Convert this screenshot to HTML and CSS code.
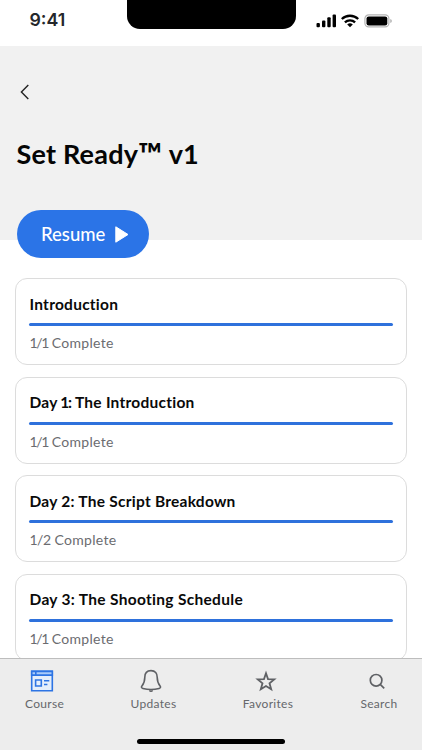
FILE: index.html
```
<!DOCTYPE html>
<html lang="en">
<head>
<meta charset="utf-8">
<meta name="viewport" content="width=device-width, initial-scale=1">
<title>Set Ready™ v1</title>
<link rel="stylesheet" href="styles.css">
</head>
<body>
<div class="screen">
  <header class="status">
    <span class="time">9:41</span>
    <span class="notch"></span>
    <svg class="status-icons" width="76" height="14" viewBox="0 0 76 14">
      <rect x="0.5" y="9" width="3.4" height="4.2" rx="1"/>
      <rect x="6" y="6.5" width="3.4" height="6.7" rx="1"/>
      <rect x="11.3" y="3.3" width="3.4" height="9.9" rx="1"/>
      <rect x="16.6" y="0.4" width="3.4" height="12.8" rx="1"/>
      <g fill="none" stroke="#000" stroke-width="2.3">
        <path d="M25.8 5A12 12 0 0 1 42.2 5"/>
        <path d="M28.9 8.4A7.4 7.4 0 0 1 39.1 8.4"/>
      </g>
      <path d="M31.2 10.4Q34 8.2 36.8 10.4L34 13.2Z"/>
      <rect x="48.9" y="0.9" width="24" height="12" rx="3.8" fill="none" stroke="#b4b4b4" stroke-width="1.2"/>
      <rect x="50.5" y="2.4" width="20.8" height="9" rx="2.2"/>
      <path d="M74.3 5v4Q75.8 8.4 75.8 7T74.3 5Z" fill="#aaa"/>
    </svg>
  </header>
  <section class="hero">
    <svg class="back" width="10" height="16" viewBox="0 0 10 16"><path d="M8.3 1L1.4 8l6.9 7"/></svg>
    <h1>Set Ready<span class="tm">™</span> v1</h1>
    <button class="resume"><span>Resume</span><svg width="14" height="17" viewBox="0 0 14 17"><path d="M.8.8v15.4L13 8.5Z"/></svg></button>
  </section>
  <main class="lessons">
    <article class="card"><h2>Introduction</h2><div class="bar"></div><p><span class="tight">1/1</span> Complete</p></article>
    <article class="card"><h2>Day <span class="tight">1:</span> The Introduction</h2><div class="bar"></div><p><span class="tight">1/1</span> Complete</p></article>
    <article class="card"><h2>Day 2: The Script Breakdown</h2><div class="bar"></div><p><span class="half">1/2</span> Complete</p></article>
    <article class="card"><h2 class="wide">Day 3: The Shooting Schedule</h2><div class="bar"></div><p><span class="tight">1/1</span> Complete</p></article>
  </main>
  <nav class="tabs">
    <div class="tab">
      <svg width="24" height="24" viewBox="0 0 24 24" fill="none" stroke="#2d74e4" stroke-width="1.6"><path fill="#e4eefb" d="M1.7 2.4h20.6v19.3H1.7Z"/><path fill="#a9cbfa" d="M1.7 2.4h20.6v3.7H1.7Z"/><path d="M5.8 2.4v3.7M14 11.8h5.3M14 15.5h3.4"/><path d="M5.6 11h5.7v6H5.6Z"/></svg>
      <span>Course</span>
    </div>
    <div class="tab">
      <svg width="24" height="24" viewBox="0 0 24 24" fill="none" stroke="#5f6165" stroke-width="1.6" stroke-linejoin="round"><path d="M12 1.6C7.7 1.6 5.8 4.6 5.8 8.3c0 5.2-1.2 6.7-2.9 8.7-.9 1.2-.4 2 1 2.4 5 1.4 11.2 1.4 16.2 0 1.4-.4 1.9-1.2 1-2.4-1.7-2-2.9-3.500-2.9-8.7C18.2 4.6 16.3 1.6 12 1.6Z"/><path d="M10.2 21.8h3.6Q12 23.6 10.2 21.8Z" fill="#5f6165" stroke-width=".8"/></svg>
      <span>Updates</span>
    </div>
    <div class="tab">
      <svg width="24" height="24" viewBox="0 0 24 24" fill="none" stroke="#5f6165" stroke-width="1.8"><path d="M12 4.3l2 5.8 6.3.3-4.8 3.9 1.7 6-5.2-3.3-5.2 3.3 1.7-6-4.8-3.9 6.3-.3Z"/></svg>
      <span>Favorites</span>
    </div>
    <div class="tab">
      <svg width="24" height="24" viewBox="0 0 24 24" fill="none" stroke="#5f6165" stroke-width="1.7"><circle cx="11.1" cy="11.3" r="5.8"/><path d="M15.2 15.4l4 3.9"/></svg>
      <span>Search</span>
    </div>
    <div class="home"></div>
  </nav>
</div>
</body>
</html>
```
FILE: styles.css
```
* { box-sizing: border-box; }
body { margin: 0; background: #fff; font-family: Lato, "Liberation Sans", sans-serif; font-variant-ligatures: none; }
.screen { width: 422px; height: 750px; overflow: hidden; display: flex; flex-direction: column; }
.status { height: 46px; flex: none; display: grid; grid-template-columns: 126.5px 169px 126.5px; align-items: start; }
.time { padding: 9px 0 0 29.5px; font: 600 17.8px/21px Inter, sans-serif; color: #25272b; }
.notch { height: 29px; background: #000; border-radius: 0 0 13px 13px; }
.status-icons { margin: 14px 0 0 20.5px; }
.hero { height: 194px; flex: none; background: #f1f1f1; padding: 38px 16px 0; display: flex; flex-direction: column; align-items: flex-start; }
.back { flex: none; margin-left: 4px; fill: none; stroke: #222; stroke-width: 1.4; }
h1 { margin: 37px 0 0; height: 34px; font-size: 27px; line-height: 34px; font-weight: 700; letter-spacing: .2px; padding-left: .5px; white-space: nowrap; color: #050505; }
.tm { font-size: 32px; line-height: 1; vertical-align: -2px; }
.resume { margin: 39px 0 0 .5px; width: 132.5px; height: 48px; flex: none; border: 0; border-radius: 24px; background: #2b74e7; color: #fff; padding: 0 20px 0 24.5px; display: flex; align-items: center; justify-content: space-between; font: 500 18.5px/24px Lato, sans-serif; }
.resume svg { fill: #fff; stroke: #fff; stroke-width: 1; stroke-linejoin: round; }
.lessons { flex: 1; min-height: 0; overflow: hidden; padding: 38px 15px 0; display: flex; flex-direction: column; gap: 11.6px; }
.card { height: 87px; flex: none; border: 1px solid #dcdcdc; border-radius: 12px; padding: 14.5px 13px 0; background: #fff; }
h2 { margin: 0; padding-left: .5px; font-size: 15.5px; line-height: 20px; font-weight: 700; letter-spacing: .25px; white-space: nowrap; color: #0a0a0a; }
h2.wide { letter-spacing: .31px; }
h2 .tight { letter-spacing: -1.2px; margin: 0 .5px 0 -1px; }
.bar { height: 3px; margin-top: 9.5px; border-radius: 2px; background: #2e71dc; }
.card p { margin: 8px 0 0; padding-left: 1px; font-size: 14px; line-height: 18px; letter-spacing: .3px; color: #6b6c70; white-space: nowrap; }
p .tight { letter-spacing: -1.4px; margin-left: -.5px; }
p .half { letter-spacing: -.5px; margin-left: -.5px; }
.tabs { height: 92px; flex: none; border-top: 1px solid #bdbdbd; background: #ededed; position: relative; display: grid; grid-template-columns: 39px 45px 50px 38px; gap: 67px; padding: 10px 0 0 25px; }
.tab { display: flex; flex-direction: column; align-items: center; gap: 2px; font-size: 12px; line-height: 17px; letter-spacing: .3px; color: #65676b; }
.tab svg { margin-right: 5px; flex: none; }
.tab:last-of-type { letter-spacing: .35px; }
.home { position: absolute; left: 137px; top: 80px; width: 148px; height: 5px; border-radius: 3px; background: #000; }
```
